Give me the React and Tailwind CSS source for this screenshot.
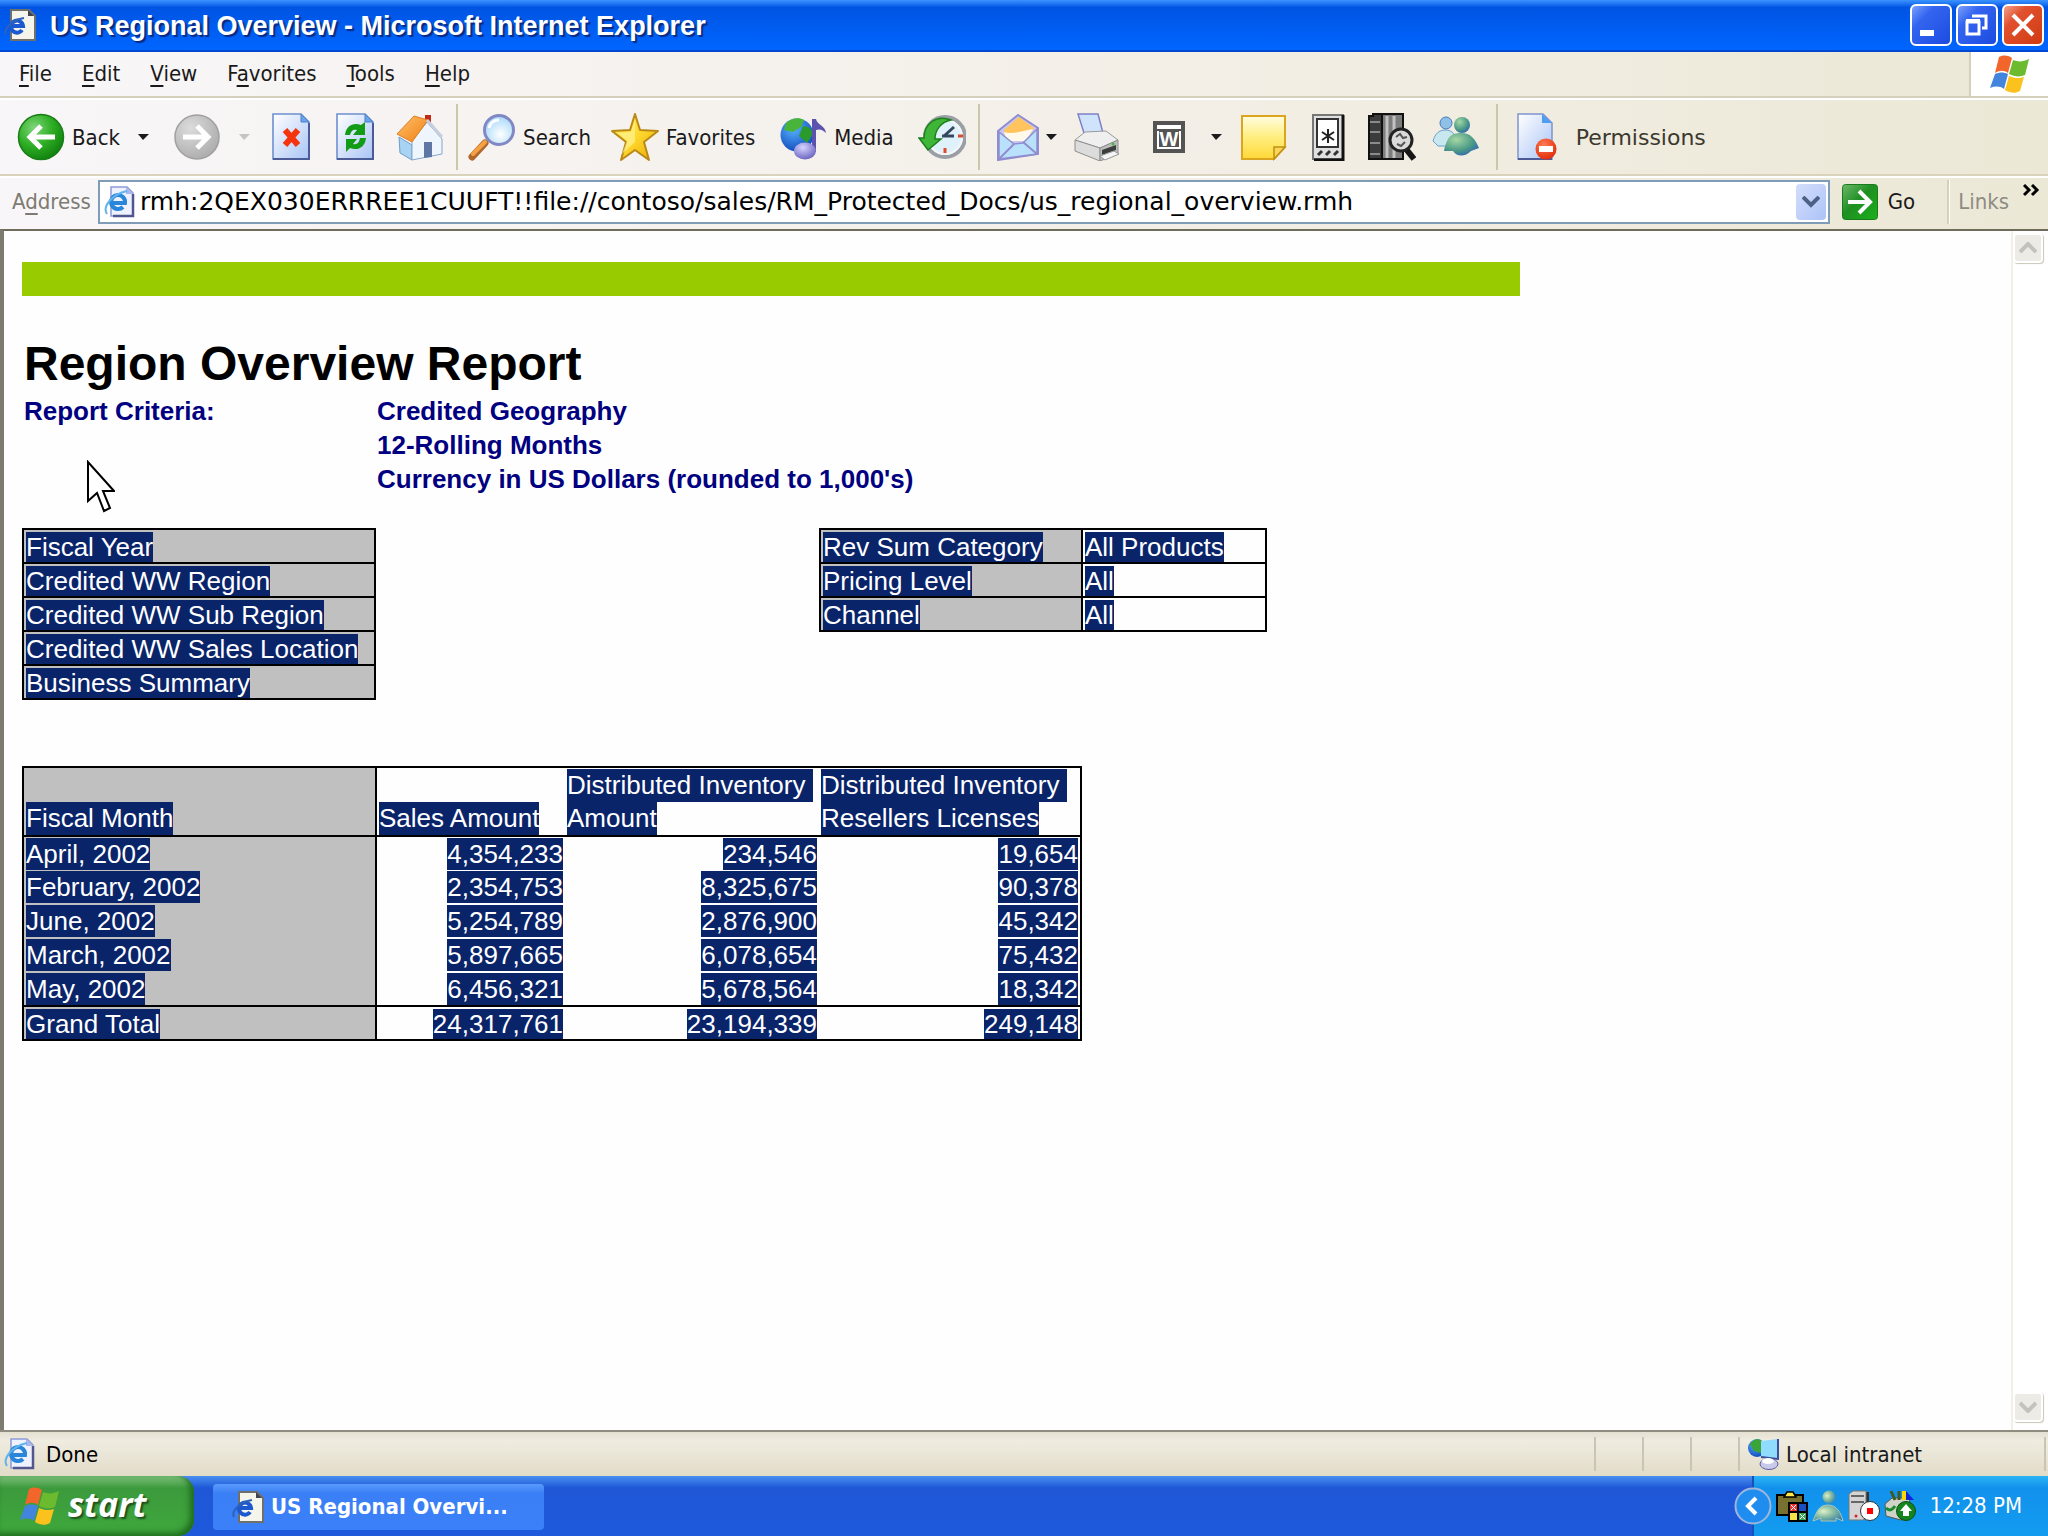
import { useState } from 'react';

const MENUS = [
    ['', 'F', 'ile'],
    ['', 'E', 'dit'],
    ['', 'V', 'iew'],
    ['F', 'a', 'vorites'],
    ['', 'T', 'ools'],
    ['', 'H', 'elp'],
];

const CRITERIA = ['Credited Geography', '12-Rolling Months', "Currency in US Dollars (rounded to 1,000's)"];

const DIMENSIONS = [
    'Fiscal Year',
    'Credited WW Region',
    'Credited WW Sub Region',
    'Credited WW Sales Location',
    'Business Summary',
];

const FILTERS = [
    ['Rev Sum Category', 'All Products'],
    ['Pricing Level', 'All'],
    ['Channel', 'All'],
];

const MONTHS = [
    ['April, 2002', '4,354,233', '234,546', '19,654'],
    ['February, 2002', '2,354,753', '8,325,675', '90,378'],
    ['June, 2002', '5,254,789', '2,876,900', '45,342'],
    ['March, 2002', '5,897,665', '6,078,654', '75,432'],
    ['May, 2002', '6,456,321', '5,678,564', '18,342'],
];

const TOTALS = ['Grand Total', '24,317,761', '23,194,339', '249,148'];

/* ---------- icons ---------- */

const Icon = ({ children, box = '0 0 48 48', className = 'w-12 h-12' }) => (
    <svg viewBox={box} className={`${className} shrink-0`} aria-hidden="true">
        {children}
    </svg>
);

const Gradients = () => (
    <svg className="absolute w-0 h-0" aria-hidden="true">
        <defs>
            <radialGradient id="green" cx="0.35" cy="0.3" r="0.8">
                <stop offset="0" stopColor="#7fd67a" />
                <stop offset="0.5" stopColor="#2fae25" />
                <stop offset="1" stopColor="#0b7a0a" />
            </radialGradient>
            <radialGradient id="gray" cx="0.35" cy="0.3" r="0.8">
                <stop offset="0" stopColor="#dcdcdc" />
                <stop offset="1" stopColor="#a9a9a9" />
            </radialGradient>
            <linearGradient id="page" x1="0" y1="0" x2="1" y2="1">
                <stop offset="0" stopColor="#ffffff" />
                <stop offset="1" stopColor="#a9c4f5" />
            </linearGradient>
            <linearGradient id="roof" x1="0" y1="0" x2="1" y2="1">
                <stop offset="0" stopColor="#ffc36b" />
                <stop offset="1" stopColor="#f07d12" />
            </linearGradient>
            <radialGradient id="lens" cx="0.55" cy="0.65" r="0.7">
                <stop offset="0" stopColor="#ffffff" />
                <stop offset="1" stopColor="#9cd4f8" />
            </radialGradient>
            <linearGradient id="gold" x1="0" y1="0" x2="1" y2="1">
                <stop offset="0" stopColor="#fff27a" />
                <stop offset="0.5" stopColor="#ffd92e" />
                <stop offset="1" stopColor="#e9a800" />
            </linearGradient>
            <radialGradient id="globe" cx="0.4" cy="0.3" r="0.8">
                <stop offset="0" stopColor="#58b4ff" />
                <stop offset="1" stopColor="#0a3fb5" />
            </radialGradient>
            <radialGradient id="violet" cx="0.4" cy="0.3" r="0.8">
                <stop offset="0" stopColor="#d5d3ff" />
                <stop offset="1" stopColor="#5f57b8" />
            </radialGradient>
            <linearGradient id="note" x1="0" y1="0" x2="0" y2="1">
                <stop offset="0" stopColor="#fffde0" />
                <stop offset="0.5" stopColor="#ffee7d" />
                <stop offset="1" stopColor="#ffd838" />
            </linearGradient>
            <radialGradient id="buddy" cx="0.35" cy="0.3" r="0.8">
                <stop offset="0" stopColor="#a5d7a4" />
                <stop offset="0.6" stopColor="#4c9a86" />
                <stop offset="1" stopColor="#2b62b5" />
            </radialGradient>
            <radialGradient id="buddyPale" cx="0.35" cy="0.4" r="0.8">
                <stop offset="0" stopColor="#dff0c4" />
                <stop offset="0.5" stopColor="#79b3a0" />
                <stop offset="1" stopColor="#2f6fa8" />
            </radialGradient>
            <linearGradient id="goFill" x1="0" y1="0" x2="1" y2="1">
                <stop offset="0" stopColor="#6cb96a" />
                <stop offset="0.45" stopColor="#1f8f22" />
                <stop offset="1" stopColor="#1ab11a" />
            </linearGradient>
            <radialGradient id="stopSign" cx="0.4" cy="0.3" r="0.8">
                <stop offset="0" stopColor="#ff7a55" />
                <stop offset="1" stopColor="#dc2400" />
            </radialGradient>
        </defs>
    </svg>
);

const BackIcon = () => (
    <Icon>
        <circle cx="24" cy="24" r="22.5" fill="url(#green)" stroke="#177d14" strokeWidth="1.5" />
        <path d="M38 24H14M24 13L13 24l11 11" fill="none" stroke="#fff" strokeWidth="5" />
    </Icon>
);

const ForwardIcon = () => (
    <Icon>
        <circle cx="24" cy="24" r="22" fill="url(#gray)" stroke="#a0a0a0" strokeWidth="1.5" />
        <path d="M10 24h24M24 13l11 11-11 11" fill="none" stroke="#fff" strokeWidth="5" />
    </Icon>
);

const Sheet = () => (
    <>
        <path d="M5 1h28l8 8v37H5z" fill="url(#page)" stroke="#6e8fd0" strokeWidth="1.6" />
        <path d="M41 10v36H5" fill="none" stroke="#4c5a98" strokeWidth="2" />
        <path d="M33 1v8h8z" fill="#6aa3ea" stroke="#4d7fcb" />
    </>
);

const StopIcon = () => (
    <Icon>
        <Sheet />
        <path d="M17 17l13 15M30 17L17 32" stroke="#f5330c" strokeWidth="6" />
    </Icon>
);

const RefreshIcon = () => (
    <Icon>
        <Sheet />
        <path d="M13 22c1-10 9-13 16-10l4-3v13H21l4-5c-4-1-6 1-7 5z" fill="#129c15" />
        <path d="M34 25c-1 10-9 13-16 10l-4 4V26h11l-4 5c4 1 6-1 7-6z" fill="#129c15" />
    </Icon>
);

const HomeIcon = () => (
    <Icon>
        <path d="M29 2h6v12h-6z" fill="#c22a17" />
        <path d="M3 24l13 8v15L4 40z" fill="#a9d3f3" stroke="#6e9ccc" />
        <path d="M16 28L31 9l15 17v15l-30 6z" fill="#eef5fd" stroke="#86a5cf" />
        <path d="M28 29h8v15l-8 1z" fill="#5d76a4" />
        <path d="M1 21L18 3l14 4-16 22z" fill="url(#roof)" stroke="#df7f22" />
        <path d="M31 7l15 17" stroke="#c8cede" strokeWidth="3" />
    </Icon>
);

const SearchIcon = () => (
    <Icon>
        <path d="M17 30L4 44" stroke="#b0672b" strokeWidth="7" strokeLinecap="round" />
        <path d="M17 29L5 41" stroke="#f6a044" strokeWidth="4" strokeLinecap="round" />
        <circle cx="31" cy="17" r="14.5" fill="url(#lens)" stroke="#8188c4" strokeWidth="3" />
        <path d="M21 15c1-5 5-8 10-8" fill="none" stroke="#fff" strokeWidth="3" />
    </Icon>
);

const StarIcon = () => (
    <Icon>
        <path
            d="M24 1l5 16 18 1-14 11 5 18-14-10-14 10 5-18L1 18l18-1z"
            fill="url(#gold)"
            stroke="#b98916"
            strokeWidth="2"
            strokeLinejoin="round"
        />
        <path d="M24 7v22l-13 12 5-13L7 20l13-1z" fill="#fff6a0" opacity="0.6" />
    </Icon>
);

const MediaIcon = () => (
    <Icon>
        <circle cx="18" cy="22" r="16.5" fill="url(#globe)" />
        <path d="M7 10c5-5 13-6 18-3l-3 7-8 5-9-2z" fill="#48b53a" />
        <path d="M24 13c5 0 9 3 10 8l-6 9-8-7z" fill="#2a9a2c" />
        <path d="M33 6h4c1 6 9 6 10 14-4-4-7-4-10-3v22h-4z" fill="#5b53ad" />
        <ellipse cx="26" cy="38" rx="11" ry="8.5" fill="url(#violet)" />
    </Icon>
);

const HistoryIcon = () => (
    <Icon>
        <circle cx="27" cy="24" r="20" fill="#dff2fb" stroke="#9a9fa6" strokeWidth="4" />
        <circle cx="27" cy="24" r="17" fill="none" stroke="#f4f6f8" strokeWidth="2" />
        <path d="M26 23l10-9M24 23h12" stroke="#34495e" strokeWidth="3" />
        <path d="M27 35v5M40 23h5" stroke="#e04b2f" strokeWidth="3" />
        <path d="M33 7C18 1 6 11 6 25H1l9 12 13-11h-6c0-9 6-17 16-19z" fill="#3fb637" stroke="#1c7f1b" strokeWidth="1.5" />
    </Icon>
);

const MailIcon = () => (
    <Icon>
        <path d="M4 18L24 2l20 13v26L4 47z" fill="#c9c7ee" stroke="#8f8cd0" strokeWidth="2" />
        <path d="M10 17L25 4l15 11-8 12-20 1z" fill="#ffc45e" />
        <path d="M10 19c10 3 20-2 29-3l-7 12H13z" fill="#fff9ec" />
        <path d="M5 19l15 12 9-1 14-14v25L5 46z" fill="#b9e1fb" stroke="#8f8cd0" strokeWidth="1.5" />
        <path d="M5 46l15-15M43 41L29 29" stroke="#8f8cd0" strokeWidth="2" />
    </Icon>
);

const PrinterIcon = () => (
    <Icon>
        <path d="M5 1h20l5 19H11z" fill="#cfe3fd" stroke="#8080c8" strokeWidth="1.5" />
        <path d="M2 27l10-8 21-1 12 9-18 8z" fill="#efefef" stroke="#9a9a9a" />
        <path d="M2 27l25 8v13L2 38z" fill="#dcdcdc" stroke="#8e8e8e" />
        <path d="M27 35l18-8v14l-18 7z" fill="#bdbdbd" stroke="#8e8e8e" />
        <path d="M29 37l14-5v5l-14 5z" fill="#3b3f3c" />
        <path d="M27 43l14-5 5 3-14 6z" fill="#f5f5f5" stroke="#999" />
        <circle cx="40" cy="31" r="1.5" fill="#4bb543" />
    </Icon>
);

const WordIcon = () => (
    <Icon>
        <path d="M8 8h32v32H8z" fill="#545454" />
        <path d="M12 12h24v4H12zM12 18h24v18H12z" fill="#fff" />
        <path d="M14 18h20v16H14z" fill="#545454" />
        <text x="24" y="33" textAnchor="middle" fill="#fff" fontSize="20" fontWeight="700" fontFamily="Liberation Sans, sans-serif">
            W
        </text>
    </Icon>
);

const NoteIcon = () => (
    <Icon>
        <path d="M2 3h43v31L34 46H2z" fill="url(#note)" stroke="#dba520" strokeWidth="2" />
        <path d="M45 34H34v12z" fill="#f7d65c" stroke="#c28f12" strokeWidth="1.5" />
    </Icon>
);

const PdaIcon = () => (
    <Icon>
        <path d="M9 2h30v44H9z" fill="#e0e0e0" stroke="#777" strokeWidth="2" />
        <path d="M39 2v45H10" fill="none" stroke="#111" strokeWidth="3" />
        <path d="M13 6h21v28H13z" fill="#fff" stroke="#333" strokeWidth="2" />
        <path d="M24 16v14M18 19l12 8M30 19l-12 8" stroke="#222" strokeWidth="2" />
        <path d="M14 42l4-4M22 42l4-4M30 42l4-4" fill="none" stroke="#333" strokeWidth="3" />
    </Icon>
);

const ResearchIcon = () => (
    <Icon>
        <path d="M1 3h4V1h10v45H1z" fill="#3b3b3b" stroke="#111" strokeWidth="2" />
        <path d="M2 9h10M2 19h10M2 30h10M2 41h10" stroke="#8a8a8a" strokeWidth="2" />
        <path d="M14 1h21v45H14z" fill="#7d7d7d" stroke="#111" strokeWidth="2" />
        <path d="M19 3v42M26 3v42" stroke="#c2c2c2" strokeWidth="3" />
        <path d="M38 36l8 10" stroke="#161616" strokeWidth="6" />
        <circle cx="33" cy="27" r="11" fill="#dadada" stroke="#222" strokeWidth="3" />
        <path d="M28 24l4-3 3 4 4-1M29 31l4 2 4-4" fill="none" stroke="#555" strokeWidth="2" />
    </Icon>
);

const MessengerIcon = () => (
    <Icon>
        <circle cx="14" cy="10" r="6" fill="#8fc0e6" stroke="#4879bb" />
        <path d="M1 28c2-7 6-11 12-11s9 3 11 8l-6 8H6z" fill="#c9e7ee" stroke="#67a0d0" />
        <circle cx="30" cy="12" r="8" fill="url(#buddy)" />
        <path d="M12 38c3-14 7-18 17-18s14 6 18 15l-8 3c-6 6-14 6-18 0z" fill="url(#buddy)" />
    </Icon>
);

const PermissionIcon = () => (
    <Icon>
        <path d="M4 1h25l9 9v36H4z" fill="url(#page)" stroke="#7f94cf" strokeWidth="1.5" />
        <path d="M4 46h34" stroke="#4c5a98" strokeWidth="2" />
        <path d="M28 1v9h10z" fill="#4f9df2" />
        <circle cx="32" cy="36" r="10.5" fill="url(#stopSign)" />
        <path d="M25 33h14v6H25z" fill="#fff" />
    </Icon>
);

const FlagIcon = ({ className }) => (
    <Icon box="0 0 40 40" className={className}>
        <path d="M9 3c5-2 8-2 13 1l-4 15c-4-3-8-3-13 0z" fill="#f2662b" />
        <path d="M23 6c5 2 10 2 16-1l-4 16c-5 2-10 2-16-1z" fill="#6cbb2e" />
        <path d="M5 20c5-2 8-2 13 0l-4 15c-4-3-9-3-14-1z" fill="#4385dd" />
        <path d="M19 22c5 2 10 3 15 1l-4 14c-5 3-10 2-15-1z" fill="#fbc21d" />
    </Icon>
);

const ExplorerIcon = ({ className = 'w-8 h-8' }) => (
    <Icon box="0 0 32 32" className={className}>
        <path d="M7 1h18l6 6v24H7z" fill="#f6f5ec" stroke="#6f6f6c" strokeWidth="2" />
        <path d="M24 1v6h6z" fill="#3f4450" />
        <path d="M18 21a6 6 0 1 1 1-4H8" fill="none" stroke="#1c58cf" strokeWidth="4" />
        <path d="M2 26C-1 20 8 11 20 9" fill="none" stroke="#2e62b8" strokeWidth="2" />
    </Icon>
);

const ExplorerPageIcon = ({ className = 'w-8 h-8' }) => (
    <Icon box="0 0 32 32" className={className}>
        <path d="M7 1h16l6 6v23H7z" fill="#eef2ff" stroke="#8f99d8" strokeWidth="1.5" />
        <path d="M29 8v22H9" fill="none" stroke="#52568f" strokeWidth="2.5" />
        <path d="M22 1v7h7z" fill="#a9b8ec" />
        <path d="M19 21a7 7 0 1 1 2-4H8" fill="none" stroke="#2a86da" strokeWidth="4" />
        <path d="M3 28C-2 21 8 8 23 5" fill="none" stroke="#5fb4ee" strokeWidth="2" />
    </Icon>
);

const IntranetIcon = () => (
    <Icon box="0 0 32 32" className="w-8 h-8">
        <circle cx="9" cy="10" r="9" fill="url(#globe)" />
        <path d="M2 6c3-5 9-6 12-3l-1 12-7-2z" fill="#3aa436" />
        <path d="M13 3l17-2v19l-17-1z" fill="#8fdcff" />
        <path d="M30 1v20l-17-2" fill="none" stroke="#3c4f9c" strokeWidth="2" />
        <ellipse cx="21" cy="26" rx="9" ry="5.5" fill="#c9c9ea" stroke="#5f5e9e" />
        <ellipse cx="20" cy="23" rx="6" ry="3" fill="#fff" />
    </Icon>
);

const ClipboardIcon = () => (
    <Icon box="0 0 32 32" className="w-8 h-8">
        <path d="M1 5h26v20H1z" fill="#77702f" stroke="#000" strokeWidth="2" />
        <path d="M8 7l3-5h6l3 5z" fill="#ffe94a" stroke="#000" strokeWidth="1.5" />
        <path d="M12 12h20v20H12z" fill="#000" />
        <path d="M14 14h7v7h-7z" fill="#e33" />
        <path d="M23 14h7v7h-7z" fill="#1d4fc4" />
        <path d="M14 23h7v7h-7z" fill="#f3e24a" />
        <path d="M23 23h7v7h-7z" fill="#3aa857" />
        <path d="M15 15l5 5M20 15l-5 5M24 24l5 5M29 24l-5 5" stroke="#fff" />
    </Icon>
);

const BuddyIcon = () => (
    <Icon box="0 0 32 32" className="w-8 h-8">
        <circle cx="17" cy="7" r="6.5" fill="url(#buddyPale)" />
        <path d="M1 31c4-10 6-16 15-16s13 8 15 16l-7-3v3H9v-3z" fill="url(#buddyPale)" stroke="#a9c6b8" />
    </Icon>
);

const ServerIcon = () => (
    <Icon box="0 0 32 32" className="w-8 h-8">
        <path d="M17 2h4v26h-6z" fill="#333" />
        <path d="M1 4l4-3h13v27l-3 2H1z" fill="#d4d4d4" stroke="#777" />
        <path d="M3 6h13M3 12h13" stroke="#666" strokeWidth="2" />
        <circle cx="8" cy="26" r="1.5" fill="#d22" />
        <circle cx="22" cy="21" r="9.5" fill="#fff" stroke="#333" />
        <path d="M19 18h6v6h-6z" fill="#f00" />
    </Icon>
);

const UpdateIcon = () => (
    <Icon box="0 0 32 32" className="w-8 h-8">
        <path d="M1 14l7-6h18l-3 19-6 3-15-4z" fill="#cfd3c8" stroke="#555" />
        <path d="M7 1l4 9M15 1v9" stroke="#3f5b22" strokeWidth="3" />
        <path d="M18 1h4v9h-4z" fill="#ffd800" />
        <path d="M22 1l8 9h-8z" fill="#1026d8" />
        <path d="M2 18c4 4 7 1 9-2" fill="none" stroke="#1a8a2a" strokeWidth="3" />
        <circle cx="22" cy="21" r="9.5" fill="#12861c" stroke="#0a4d10" />
        <path d="M22 14l6 7h-3v5h-6v-5h-3z" fill="#fff" />
    </Icon>
);

const Caret = ({ className }) => (
    <Icon box="0 0 11 6" className={`w-[11px] h-[6px] ${className}`}>
        <path d="M0 0h11L5 6z" fill="currentColor" />
    </Icon>
);

/* ---------- browser chrome ---------- */

const Divider = ({ className = '' }) => <div className={`w-[2px] self-stretch my-1 bg-[#cbc7ac] ${className}`} />;

const ToolButton = ({ label, icon, text, className = 'gap-2' }) => (
    <button type="button" aria-label={label} className={`flex items-center shrink-0 ${className}`}>
        {icon}
        {text && <span className="pt-[2px]">{text}</span>}
    </button>
);

const WindowButton = ({ label, className, children }) => (
    <button
        type="button"
        aria-label={label}
        className={`w-[42px] h-[42px] rounded-md border-2 border-white flex items-center justify-center ${className}`}
    >
        <Icon box="0 0 38 38" className="w-[38px] h-[38px]">
            {children}
        </Icon>
    </button>
);

const TitleBar = () => (
    <header className="h-[52px] px-1 flex items-center bg-linear-to-b from-[#3b93ff] via-[#0054e3] via-15% to-[#0066ff] border-b-2 border-[#0048d0]">
        <ExplorerIcon />
        <h1 className="flex-1 pl-[14px] pt-[2px] text-[27px] leading-8 font-bold text-white whitespace-nowrap [text-shadow:2px_2px_1px_#0a2a80]">
            US Regional Overview - Microsoft Internet Explorer
        </h1>
        <div className="flex gap-1">
            <WindowButton label="Minimize" className="bg-linear-to-br from-[#7d9ffb] via-[#3465f0] via-30% to-[#1c4be0]">
                <path d="M8 24h14v6H8z" fill="#fff" />
            </WindowButton>
            <WindowButton label="Restore" className="bg-linear-to-br from-[#7d9ffb] via-[#3465f0] via-30% to-[#1c4be0]">
                <path d="M9 16h12v12H9z" fill="none" stroke="#fff" strokeWidth="3" />
                <path d="M8 15h14" stroke="#fff" strokeWidth="4" />
                <path d="M14 10h14v12h-4" fill="none" stroke="#fff" strokeWidth="3" />
            </WindowButton>
            <WindowButton label="Close" className="bg-linear-to-br from-[#f0a08a] via-[#e2512d] via-30% to-[#cf3a10]">
                <path d="M9 9l20 20M29 9L9 29" stroke="#fff" strokeWidth="4" />
            </WindowButton>
        </div>
    </header>
);

const MenuBar = () => (
    <div className="h-[46px] flex border-b-2 border-[#d5d0bc]">
        <nav className="flex-1 flex items-center gap-[30px] pl-[19px]">
            {MENUS.map(([before, key, after]) => (
                <button type="button" key={key + after}>
                    {before}
                    <span className="underline underline-offset-4 decoration-2">{key}</span>
                    {after}
                </button>
            ))}
        </nav>
        <div className="w-[79px] bg-white border-l-2 border-[#d5d0bc] flex items-center justify-center">
            <FlagIcon className="w-10 h-10" />
        </div>
    </div>
);

const ToolBar = () => (
    <div className="h-[78px] flex items-center pl-[17px] border-t-2 border-t-white border-b-2 border-b-[#d9d3bb]">
        <ToolButton label="Back" icon={<BackIcon />} text="Back" className="gap-[7px]" />
        <Caret className="ml-[18px]" />
        <ToolButton label="Forward" icon={<ForwardIcon />} className="ml-6" />
        <Caret className="ml-[18px] text-[#c4c4c4]" />
        <ToolButton label="Stop" icon={<StopIcon />} className="ml-[18px]" />
        <ToolButton label="Refresh" icon={<RefreshIcon />} className="ml-4" />
        <ToolButton label="Home" icon={<HomeIcon />} className="ml-4" />
        <Divider className="ml-3" />
        <ToolButton label="Search" icon={<SearchIcon />} text="Search" className="ml-[10px] gap-[7px]" />
        <ToolButton label="Favorites" icon={<StarIcon />} text="Favorites" className="ml-5 gap-[7px]" />
        <ToolButton label="Media" icon={<MediaIcon />} text="Media" className="ml-6 gap-[7px]" />
        <ToolButton label="History" icon={<HistoryIcon />} className="ml-6" />
        <Divider className="ml-3" />
        <ToolButton label="Mail" icon={<MailIcon />} className="ml-[14px]" />
        <Caret className="ml-1" />
        <ToolButton label="Print" icon={<PrinterIcon />} className="ml-4" />
        <ToolButton label="Edit with Word" icon={<WordIcon />} className="ml-6" />
        <Caret className="ml-[18px]" />
        <ToolButton label="Discuss" icon={<NoteIcon />} className="ml-[18px]" />
        <ToolButton label="Mobile favorite" icon={<PdaIcon />} className="ml-4" />
        <ToolButton label="Research" icon={<ResearchIcon />} className="ml-4" />
        <ToolButton label="Messenger" icon={<MessengerIcon />} className="ml-4" />
        <Divider className="ml-4" />
        <ToolButton
            label="Permissions"
            icon={<PermissionIcon />}
            text="Permissions"
            className="ml-4 gap-[14px] font-['DejaVu_Sans'] text-[#3b382e]"
        />
    </div>
);

const AddressBar = () => {
    const [url, setUrl] = useState(
        'rmh:2QEX030ERRREE1CUUFT!!file://contoso/sales/RM_Protected_Docs/us_regional_overview.rmh'
    );

    return (
        <div className="h-[53px] flex items-start pl-3 pt-[2px] border-t-2 border-white">
            <label htmlFor="address" className="w-[86px] leading-[44px] text-[#7d7b72]">
                A<span className="underline underline-offset-4 decoration-2">d</span>dress
            </label>
            <div className="flex-1 h-11 flex items-center bg-white border-2 border-[#7f9db9] pl-1 pr-[2px]">
                <ExplorerPageIcon />
                <input
                    id="address"
                    value={url}
                    onChange={(e) => setUrl(e.target.value)}
                    className="flex-1 min-w-0 pl-1 bg-transparent outline-none font-['DejaVu_Sans'] text-[25px] text-black"
                />
                <button
                    type="button"
                    aria-label="Show address list"
                    className="w-[30px] h-9 rounded-sm bg-linear-to-br from-[#d3defc] to-[#adc3f7] flex items-center justify-center"
                >
                    <Icon box="0 0 18 12" className="w-[18px] h-3">
                        <path d="M1 1l8 8 8-8" fill="none" stroke="#4d6185" strokeWidth="4" />
                    </Icon>
                </button>
            </div>
            <button type="button" className="h-11 ml-3 flex items-center gap-[10px]">
                <Icon box="0 0 36 36" className="w-9 h-9">
                    <rect x="0.5" y="0.5" width="35" height="35" rx="3" fill="url(#goFill)" stroke="#1b7a1c" />
                    <path d="M6 18h22M17 7l11 11-11 11" fill="none" stroke="#fff" strokeWidth="4" />
                </Icon>
                Go
            </button>
            <div className="w-[3px] h-11 ml-8 bg-[#d5d0bc] border-r border-white" />
            <span className="ml-2 leading-[44px] text-[#8d8b82]">Links</span>
            <button type="button" aria-label="More links" className="ml-[14px] mr-2 mt-1">
                <Icon box="0 0 17 13" className="w-[17px] h-[13px]">
                    <path d="M1 1l5 5-5 5M9 1l5 5-5 5" fill="none" stroke="#000" strokeWidth="3" />
                </Icon>
            </button>
        </div>
    );
};

/* ---------- report ---------- */

const Marked = ({ children, className = '' }) => (
    <span className={`inline-block align-bottom bg-[#0a246a] text-white whitespace-nowrap ${className}`}>{children}</span>
);

const ReportTables = () => (
    <>
        <div className="flex items-start mt-8">
            <table className="w-[354px] border-collapse">
                <tbody>
                    {DIMENSIONS.map((name) => (
                        <tr key={name} className="h-[34px]">
                            <th className="border-2 border-black bg-[#c0c0c0] px-[2px] pt-[2px] pb-0 text-left font-normal leading-[30px]">
                                <Marked>{name}</Marked>
                            </th>
                        </tr>
                    ))}
                </tbody>
            </table>
            <table className="w-[448px] ml-[443px] border-collapse">
                <tbody>
                    {FILTERS.map(([name, value]) => (
                        <tr key={name} className="h-[34px]">
                            <th className="w-[262px] border-2 border-black bg-[#c0c0c0] px-[2px] pt-[2px] pb-0 text-left font-normal leading-[30px]">
                                <Marked>{name}</Marked>
                            </th>
                            <td className="border-2 border-black px-[2px] pt-[2px] pb-0 leading-[30px]">
                                <Marked>{value}</Marked>
                            </td>
                        </tr>
                    ))}
                </tbody>
            </table>
        </div>

        <table className="w-[1060px] mt-[66px] border-collapse border-2 border-black table-fixed">
            <colgroup>
                <col className="w-[353px]" />
                <col className="w-[189px]" />
                <col className="w-[254px]" />
                <col />
            </colgroup>
            <thead className="border-b-2 border-black">
                <tr className="h-[69px] align-bottom text-left leading-[33px]">
                    <th className="p-0 px-[2px] border-r-2 border-black bg-[#c0c0c0] font-normal">
                        <Marked>Fiscal Month</Marked>
                    </th>
                    <th className="p-0 px-[2px] font-normal">
                        <Marked>Sales Amount</Marked>
                    </th>
                    <th className="p-0 px-[2px] font-normal">
                        <Marked className="pr-2">Distributed Inventory</Marked>
                        <br />
                        <Marked>Amount</Marked>
                    </th>
                    <th className="p-0 px-[2px] font-normal">
                        <Marked className="pr-2">Distributed Inventory</Marked>
                        <br />
                        <Marked>Resellers Licenses</Marked>
                    </th>
                </tr>
            </thead>
            <tbody>
                {MONTHS.map(([month, ...amounts]) => (
                    <tr key={month} className="h-[34px] leading-8">
                        <th className="p-0 px-[2px] border-r-2 border-black bg-[#c0c0c0] text-left font-normal">
                            <Marked>{month}</Marked>
                        </th>
                        {amounts.map((amount) => (
                            <td key={amount} className="p-0 px-[2px] text-right">
                                <Marked>{amount}</Marked>
                            </td>
                        ))}
                    </tr>
                ))}
            </tbody>
            <tfoot className="border-t-2 border-black">
                <tr className="h-8 leading-[30px]">
                    {TOTALS.map((total, i) => (
                        <td
                            key={total}
                            className={`px-[2px] pt-[2px] pb-0 ${i === 0 ? 'border-r-2 border-black bg-[#c0c0c0]' : 'text-right'}`}
                        >
                            <Marked>{total}</Marked>
                        </td>
                    ))}
                </tr>
            </tfoot>
        </table>
    </>
);

const Pointer = () => (
    <svg viewBox="0 0 28 54" className="absolute left-[83px] top-[229px] w-7 h-[54px]" aria-hidden="true">
        <path d="M1 2v39l9-8 7 18 6-3-7-17h11z" fill="#fff" stroke="#000" strokeWidth="2" />
    </svg>
);

const ScrollArrow = ({ label, d }) => (
    <button
        type="button"
        aria-label={label}
        className="w-[30px] h-[30px] rounded-sm bg-[#ecebe6] border-2 border-white shadow-[1px_1px_1px_#c9c7ba] flex items-center justify-center"
    >
        <Icon box="0 0 18 12" className="w-[18px] h-3">
            <path d={d} fill="none" stroke="#c3c2bb" strokeWidth="4" />
        </Icon>
    </button>
);

const Report = () => (
    <main className="flex-1 flex bg-[#fefefe] border-l-4 border-l-[#7d7b6e] border-t-2 border-t-[#6f6c5c]">
        <div className="relative flex-1 min-w-0 pl-[18px] pt-[31px] font-['Liberation_Sans',Arial,sans-serif] text-[26px]">
            <div className="w-[1498px] max-w-full h-[34px] bg-[#99cc00]" />
            <h2 className="mt-10 pl-[2px] text-5xl leading-[56px] font-bold text-black">Region Overview Report</h2>
            <div className="flex pl-[2px] mt-[2px] leading-[34px] font-bold text-[#000080]">
                <p className="w-[353px]">Report Criteria:</p>
                <div>
                    {CRITERIA.map((line) => (
                        <p key={line}>{line}</p>
                    ))}
                </div>
            </div>
            <ReportTables />
            <Pointer />
        </div>
        <div className="w-[37px] flex flex-col items-start justify-between pt-[2px] pb-2 border-l-2 border-[#f1efe6] bg-white">
            <ScrollArrow label="Scroll up" d="M1 10l8-8 8 8" />
            <ScrollArrow label="Scroll down" d="M1 2l8 8 8-8" />
        </div>
    </main>
);

const StatusBar = () => (
    <footer className="h-[46px] flex items-center pl-1 pr-[2px] border-t-2 border-[#8f8d80] bg-linear-to-b from-[#e4e1d2] via-[#efece0] via-20% to-[#e2dcc8]">
        <ExplorerPageIcon />
        <p className="flex-1 pl-[10px] pt-[2px] text-black">Done</p>
        {[1, 2, 3].map((n) => (
            <div key={n} className="w-12 h-[34px] border-l-2 border-[#c9c5b2]" />
        ))}
        <div className="w-[308px] h-[34px] flex items-center gap-[6px] pl-2 border-x-2 border-[#c9c5b2]">
            <IntranetIcon />
            <span className="pt-[2px]">Local intranet</span>
        </div>
    </footer>
);

const TaskBar = () => (
    <div className="h-[60px] flex items-stretch bg-linear-to-b from-[#4a8ff0] via-[#1f57d6] via-20% to-[#1e59dc] text-white">
        <button
            type="button"
            className="w-[194px] pl-[20px] flex items-center gap-2 rounded-r-2xl bg-linear-to-b from-[#7cc07a] via-[#3c9a3c] via-20% to-[#3fa83c] shadow-[inset_-4px_-3px_6px_#1d6a1d] font-['Open_Sans',sans-serif] text-[34px] leading-9 font-bold italic [text-shadow:2px_2px_2px_#1d4d1d]"
        >
            <FlagIcon className="w-10 h-10" />
            <span className="pb-1">start</span>
        </button>
        <button
            type="button"
            className="w-[331px] ml-[19px] mt-2 mb-[6px] pl-[19px] flex items-center gap-[7px] rounded bg-linear-to-b from-[#5a9afc] via-[#3a7ff5] via-20% to-[#3b80f8] font-bold text-[22px] whitespace-nowrap"
        >
            <ExplorerIcon />
            US Regional Overvi...
        </button>
        <div className="flex-1" />
        <div className="flex items-center gap-1 bg-linear-to-b from-[#2bb4f5] via-[#1291ec] via-20% to-[#129cf0] border-l-2 border-[#1650b8]">
            <button type="button" aria-label="Show hidden icons" className="-ml-5">
                <Icon box="0 0 38 38" className="w-[38px] h-[38px]">
                    <circle cx="19" cy="19" r="17.5" fill="#1f8cf0" stroke="#9db6dc" strokeWidth="2" />
                    <path d="M22 11l-8 8 8 8" fill="none" stroke="#fff" strokeWidth="4" />
                </Icon>
            </button>
            <ClipboardIcon />
            <BuddyIcon />
            <ServerIcon />
            <UpdateIcon />
            <time className="ml-[10px] mr-[26px]">12:28 PM</time>
        </div>
    </div>
);

export default function App() {
    return (
        <div className="min-h-screen flex flex-col overflow-hidden bg-[#ece9d8] font-['DejaVu_Sans_Condensed','DejaVu_Sans',sans-serif] text-[22px] leading-7 text-[#1a1a1a]">
            <Gradients />
            <div className="font-['Liberation_Sans',Arial,sans-serif]">
                <TitleBar />
            </div>
            <div className="bg-linear-to-r from-[#f8f6f8] via-[#f4f0e9] to-[#ece8d6]">
                <MenuBar />
                <ToolBar />
                <AddressBar />
            </div>
            <Report />
            <StatusBar />
            <TaskBar />
        </div>
    );
}
